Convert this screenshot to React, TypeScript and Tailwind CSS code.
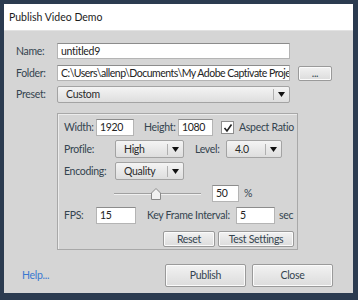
import React from "react";

const label = "text-[#34444f] whitespace-nowrap";

function Input({ value, w, h = "h-[17px]" }: { value: string; w: string; h?: string }) {
  return (
    <div
      className={`${w} ${h} bg-white border border-[#b4b4b4] border-t-[#8c8c8c] flex items-center pl-[3px] text-[#222] overflow-hidden whitespace-nowrap`}
    >
      {value}
    </div>
  );
}

function Button({ text, w, h }: { text: string; w: string; h: string }) {
  return (
    <div
      className={`${w} ${h} flex items-center justify-center border border-[#9a9a9a] rounded-[2px] bg-gradient-to-b from-[#f2f2f2] to-[#dcdcdc] shadow-[inset_0_0_0_1px_#fbfbfb] ${label}`}
    >
      {text}
    </div>
  );
}

function Select({ value, w, h = "h-[18px]" }: { value: string; w: string; h?: string }) {
  return (
    <div
      className={`${w} ${h} flex items-center border border-[#a3a3a3] rounded-[2px] bg-gradient-to-b from-[#f4f4f4] to-[#dedede] text-[#2a2a2a]`}
    >
      <span className="flex-1 pl-[8px]">{value}</span>
      <span className="w-px h-[11px] bg-[#b0b0b0]" />
      <span className="w-[15px] flex justify-center">
        <svg width="7" height="5" viewBox="0 0 7 5">
          <path d="M0 0 H7 L3.5 5 Z" fill="#111" />
        </svg>
      </span>
    </div>
  );
}

export default function App() {
  return (
    <div
      className="w-[358px] h-[300px] bg-[#2b3b50] pt-[4px] pl-[4px] pr-[5px] pb-[7px] text-[10.5px] tracking-[-0.3px] leading-none"
      style={{ fontFamily: 'Lato, "Noto Sans", sans-serif' }}
    >
      <div className="h-full flex flex-col">
        <div className="h-[27px] bg-white border-b border-[#e2e2e2] flex items-center pl-[5px] text-[10.5px] tracking-[0px] text-[#1c1c1c]">
          Publish Video Demo
        </div>
        <div className="flex-1 bg-[#d5d5d5] pl-[12px] pt-[12px] flex flex-col">
          <div className="flex items-center h-[16px]">
            <span className={`w-[41px] ${label}`}>Name:</span>
            <Input value="untitled9" w="w-[233px]" h="h-[16px]" />
          </div>
          <div className="flex items-center h-[16px] mt-[6px]">
            <span className={`w-[41px] ${label}`}>Folder:</span>
            <Input
              value="C:\Users\allenp\Documents\My Adobe Captivate Projec"
              w="w-[233px] tracking-[-0.5px]"
              h="h-[16px]"
            />
            <div className="ml-[8px]">
              <Button text="..." w="w-[34px]" h="h-[15px]" />
            </div>
          </div>
          <div className="flex items-center h-[17px] mt-[5px]">
            <span className={`w-[41px] ${label}`}>Preset:</span>
            <Select value="Custom" w="w-[233px]" h="h-[17px]" />
          </div>

          <div className="ml-[41px] mt-[10px] w-[241px] h-[137px] border border-[#a8a8a8] shadow-[inset_1px_1px_0_#ececec] pl-[6px] pt-[5px] flex flex-col">
            <div className="flex items-center h-[17px]">
              <span className={`w-[32px] ${label}`}>Width:</span>
              <Input value="1920" w="w-[38px]" />
              <span className={`ml-[10px] w-[34px] ${label}`}>Height:</span>
              <Input value="1080" w="w-[35px]" />
              <span className="ml-[8px] w-[13px] h-[13px] bg-white border border-[#8e8e8e] flex items-center justify-center">
                <svg width="10" height="10" viewBox="0 0 10 10">
                  <path d="M1.5 5 L4 8 L8.5 1.5" stroke="#222" strokeWidth="1.6" fill="none" />
                </svg>
              </span>
              <span className={`ml-[5px] ${label}`}>Aspect Ratio</span>
            </div>
            <div className="flex items-center h-[18px] mt-[4px]">
              <span className={`w-[51px] ${label}`}>Profile:</span>
              <Select value="High" w="w-[69px]" />
              <span className={`ml-[11px] w-[31px] ${label}`}>Level:</span>
              <Select value="4.0" w="w-[56px]" />
            </div>
            <div className="flex items-center h-[18px] mt-[4px]">
              <span className={`w-[51px] ${label}`}>Encoding:</span>
              <Select value="Quality" w="w-[69px]" />
            </div>
            <div className="flex items-center h-[17px] mt-[5px]">
              <div className="ml-[50px] w-[87px] h-[12px] relative">
                <div className="absolute left-0 right-0 top-[5px] h-[2px] bg-[#a0a0a0] border-b border-[#f0f0f0]" />
                <svg className="absolute left-[37px] top-0" width="10" height="12" viewBox="0 0 10 12">
                  <path d="M5 0.5 L9.5 5 V11.5 H0.5 V5 Z" fill="#f2f2f2" stroke="#8a8a8a" />
                </svg>
              </div>
              <div className="ml-[11px]">
                <Input value="50" w="w-[27px]" />
              </div>
              <span className={`ml-[5px] ${label}`}>%</span>
            </div>
            <div className="flex items-center h-[17px] mt-[5px]">
              <span className={`w-[32px] ${label}`}>FPS:</span>
              <Input value="15" w="w-[40px]" />
              <span className={`ml-[11px] w-[89px] ${label}`}>Key Frame Interval:</span>
              <Input value="5" w="w-[39px]" />
              <span className={`ml-[4px] ${label}`}>sec</span>
            </div>
            <div className="flex items-center h-[16px] mt-[7px] pl-[99px] gap-[3px]">
              <Button text="Reset" w="w-[52px]" h="h-[16px]" />
              <Button text="Test Settings" w="w-[76px]" h="h-[16px]" />
            </div>
          </div>

          <div className="flex items-center mt-[14px] h-[23px]">
            <span className="ml-[6px] text-[#3a78d0] w-[143px]">Help...</span>
            <Button text="Publish" w="w-[81px]" h="h-[23px]" />
            <div className="ml-[6px]">
              <Button text="Close" w="w-[81px]" h="h-[23px]" />
            </div>
          </div>
        </div>
      </div>
    </div>
  );
}
